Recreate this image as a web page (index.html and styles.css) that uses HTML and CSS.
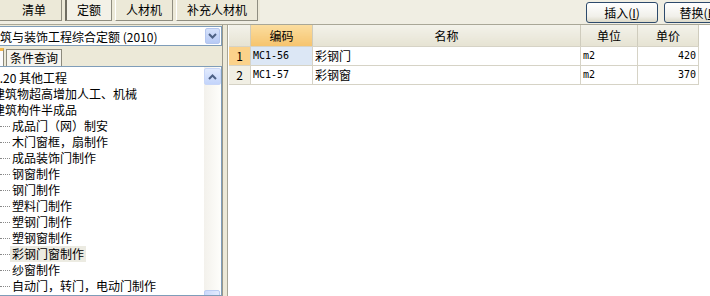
FILE: index.html
```html
<!DOCTYPE html>
<html lang="zh-CN">
<head>
    <meta charset="UTF-8">
    <title>定额</title>
    <link rel="stylesheet" href="styles.css">
</head>
<body>
    <div class="app">
        <div class="topbar">
            <div class="tabs">
                <div class="tab tab-first">清单</div>
                <div class="tab tab-active">定额</div>
                <div class="tab">人材机</div>
                <div class="tab">补充人材机</div>
            </div>
            <div class="actions">
                <button class="btn">插入(<u>I</u>)</button>
                <button class="btn">替换(<u>H</u>)</button>
            </div>
        </div>

        <div class="main">
            <div class="left">
                <div class="combo">
                    <span class="combo-text">建筑与装饰工程综合定额 (2010)</span>
                    <span class="combo-btn">
                        <svg width="9" height="6" viewBox="0 0 9 6"><path d="M1 1 L4.5 4.5 L8 1" fill="none" stroke="#4d6185" stroke-width="2"/></svg>
                    </span>
                </div>
                <div class="subtabs">
                    <div class="subtab subtab-active"></div>
                    <div class="subtab">条件查询</div>
                </div>
                <div class="tree">
                    <ul class="tree-list">
                        <li class="lvl1">1.20 其他工程</li>
                        <li class="lvl1">建筑物超高增加人工、机械</li>
                        <li class="lvl1">建筑构件半成品</li>
                        <li class="lvl2">成品门（网）制安</li>
                        <li class="lvl2">木门窗框，扇制作</li>
                        <li class="lvl2">成品装饰门制作</li>
                        <li class="lvl2">钢窗制作</li>
                        <li class="lvl2">钢门制作</li>
                        <li class="lvl2">塑料门制作</li>
                        <li class="lvl2">塑钢门制作</li>
                        <li class="lvl2">塑钢窗制作</li>
                        <li class="lvl2 selected"><span>彩钢门窗制作</span></li>
                        <li class="lvl2">纱窗制作</li>
                        <li class="lvl2">自动门，转门，电动门制作</li>
                    </ul>
                    <div class="scrollbar">
                        <div class="sb-btn">
                            <svg width="9" height="6" viewBox="0 0 9 6"><path d="M1 5 L4.5 1.5 L8 5" fill="none" stroke="#4d6185" stroke-width="2"/></svg>
                        </div>
                        <div class="sb-track"></div>
                        <div class="sb-thumb"></div>
                    </div>
                </div>
            </div>
            <div class="splitter"></div>
            <div class="grid-wrap">
                <table class="grid">
                    <thead>
                        <tr>
                            <th class="c-no"></th>
                            <th class="c-code hl">编码</th>
                            <th class="c-name">名称</th>
                            <th class="c-unit">单位</th>
                            <th class="c-price">单价</th>
                        </tr>
                    </thead>
                    <tbody>
                        <tr>
                            <td class="c-no hl">1</td>
                            <td class="c-code cur">MC1-56</td>
                            <td class="c-name">彩钢门</td>
                            <td class="c-unit">m2</td>
                            <td class="c-price">420</td>
                        </tr>
                        <tr>
                            <td class="c-no">2</td>
                            <td class="c-code">MC1-57</td>
                            <td class="c-name">彩钢窗</td>
                            <td class="c-unit">m2</td>
                            <td class="c-price">370</td>
                        </tr>
                    </tbody>
                </table>
            </div>
        </div>
    </div>
</body>
</html>
```

FILE: styles.css
```css
body {
    margin: 0;
    font-family: "Noto Sans CJK SC", "Noto Sans", sans-serif;
    font-size: 12px;
    color: #000;
    background: #fff;
}
.app {
    width: 710px;
    height: 296px;
    overflow: hidden;
    display: flex;
    flex-direction: column;
}
.topbar {
    height: 24px;
    flex: none;
    display: flex;
    justify-content: space-between;
    background: #f0eee3;
    border-bottom: 1px solid #a9a797;
}
.tabs {
    display: flex;
    gap: 3px;
    height: 21px;
    background: #ece9d8;
    padding-right: 2px;
}
.tab {
    height: 20px;
    line-height: 19px;
    padding: 0 10px;
    background: #ece9d8;
    border-left: 1px solid #fff;
    border-right: 1px solid #8f8d80;
    border-bottom: 1px solid #8f8d80;
}
.tab-first {
    padding-left: 22px;
    margin-left: -1px;
    padding-right: 15px;
}
.tab-active {
    border-left: 2px solid #6f6d62;
    background: #f3f1e7;
}
.actions {
    display: flex;
    gap: 6px;
    padding-top: 2px;
    margin-right: -26px;
}
.btn {
    width: 72px;
    height: 21px;
    padding: 0;
    font-family: inherit;
    font-size: 12px;
    border: 1px solid #2d4a6c;
    border-radius: 3px;
    background: linear-gradient(#ffffff, #f1f0ea 70%, #dcd9c8);
}
.main {
    flex: 1;
    display: flex;
    min-height: 0;
}
.left {
    width: 222px;
    flex: none;
    display: flex;
    flex-direction: column;
    background: #ece9d8;
    padding-top: 1px;
}
.combo {
    height: 18px;
    margin-left: -3px;
    border: 1px solid #7f9db9;
    background: #fff;
    display: flex;
    align-items: center;
    justify-content: space-between;
    padding: 0 1px 0 0;
}
.combo-text {
    margin-left: -10px;
    white-space: nowrap;
}
.combo-btn {
    width: 15px;
    height: 16px;
    border-radius: 2px;
    background: linear-gradient(#d6e2fb, #b7caf5);
    border: 1px solid #b5c7ef;
    box-sizing: border-box;
    display: flex;
    align-items: center;
    justify-content: center;
}
.subtabs {
    height: 20px;
    display: flex;
    align-items: flex-end;
    gap: 2px;
}
.subtab {
    height: 16px;
    line-height: 15px;
    padding: 0 3px;
    background: #f5f4ee;
    border: 1px solid #8c8a7d;
    border-bottom: none;
}
.subtab-active {
    width: 6px;
    height: 18px;
    padding: 0;
    margin-left: -2px;
    background: #fcfcfe;
    border-top: 3px solid #f4b74a;
    box-sizing: border-box;
}
.tree {
    flex: 1;
    display: flex;
    background: #fff;
    border: 1px solid #7f9db9;
    border-left: none;
    overflow: hidden;
}
.tree-list {
    flex: 1;
    list-style: none;
    margin: 0;
    padding: 3px 0 0;
    overflow: hidden;
}
.tree-list li {
    height: 16px;
    line-height: 16px;
    white-space: nowrap;
}
.lvl1 {
    margin-left: -7px;
}
.lvl2 {
    position: relative;
    padding-left: 12px;
}
.lvl2::before {
    content: "";
    position: absolute;
    left: 0;
    top: 8px;
    width: 10px;
    border-top: 1px dotted #8a8a8a;
}
.selected span {
    display: inline-block;
    margin-left: -2px;
    padding: 0 2px;
    background: #ecebe2;
}
.scrollbar {
    width: 17px;
    flex: none;
    display: flex;
    flex-direction: column;
    background: linear-gradient(90deg, #f3f1ec, #fefefb);
    position: relative;
}
.sb-btn {
    height: 17px;
    margin-top: 1px;
    border-radius: 2px;
    background: linear-gradient(#e2ebfd, #c3d4fb);
    border: 1px solid #c8d6f7;
    box-sizing: border-box;
    display: flex;
    align-items: center;
    justify-content: center;
}
.sb-track {
    flex: 1;
}
.sb-thumb {
    position: absolute;
    left: 0;
    right: 1px;
    bottom: -24px;
    height: 27px;
    border: 1px solid #bccdf3;
    border-radius: 2px;
    background: linear-gradient(90deg, #cbd9fb, #e3ebfe);
}
.splitter {
    width: 4px;
    flex: none;
    background: #ece9d8;
    border-left: 1px solid #9a988a;
    border-right: 1px solid #a7a596;
}
.grid-wrap {
    flex: 1;
    background: #fff;
    padding-left: 1px;
}
.grid {
    border-collapse: collapse;
    table-layout: fixed;
}
.grid th,
.grid td {
    height: 18px;
    padding: 0 2px;
    border-right: 1px solid #d6d3c6;
    border-bottom: 1px solid #d6d3c6;
    font-weight: normal;
    white-space: nowrap;
    line-height: 18px;
}
.grid th {
    height: 21px;
    background: linear-gradient(#f3f2ea, #e6e3d3);
    border-right-color: #cfccbd;
}
.grid th.hl {
    background: linear-gradient(#fbdd9f, #f6c46e);
}
.grid td.c-no {
    background: #f1efe4;
    text-align: center;
}
.grid td.c-no.hl {
    background: #fbd28a;
}
.grid td.cur {
    background: #dce7f5;
}
.c-no { width: 17px; }
.c-code { width: 57px; }
.c-name { width: 263px; }
.c-unit { width: 52px; }
.c-price { width: 56px; }
.grid td.c-code,
.grid td.c-unit,
.grid td.c-price {
    font-family: "DejaVu Sans Mono", monospace;
    font-size: 10px;
}
.grid td.c-price {
    text-align: right;
}
```
